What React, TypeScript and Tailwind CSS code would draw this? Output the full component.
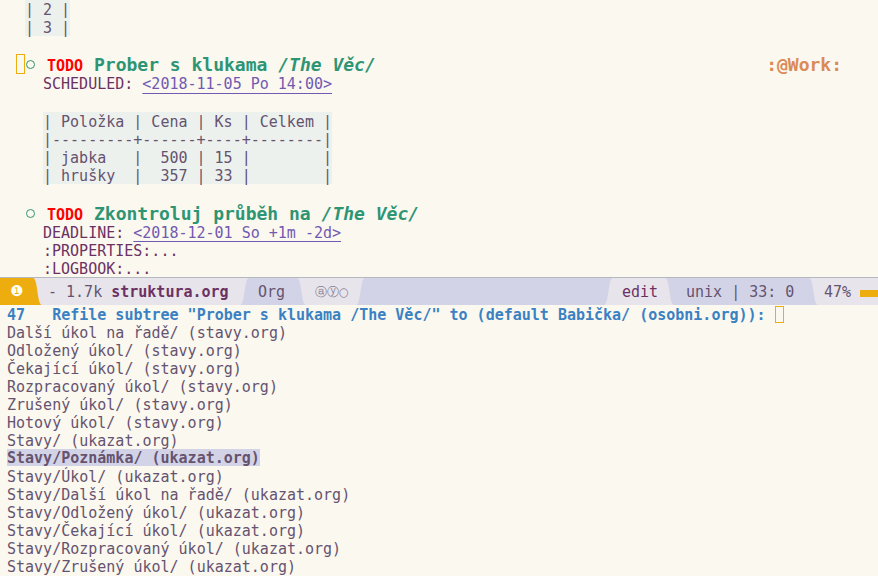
// Emacs (spacemacs-light) org buffer + refile minibuffer

const base = 'text-[#655370]';
const row = 'h-[18px] whitespace-pre leading-[20px]';

function Sep({ left, right, tab }: { left: string; right: string; tab: 'left' | 'right' }) {
  // wave separator between two powerline segments
  return (
    <svg width="10" height="27" viewBox="0 0 10 27" preserveAspectRatio="none" className="block shrink-0">
      {tab === 'left' ? (
        <>
          <rect width="10" height="27" fill={right} />
          <path d="M0 0 H1 C6 0 5 27 10 27 H0 Z" fill={left} />
        </>
      ) : (
        <>
          <rect width="10" height="27" fill={left} />
          <path d="M10 0 H9 C4 0 5 27 0 27 H10 Z" fill={right} />
        </>
      )}
    </svg>
  );
}

function TableRow({ text, indent = 'pl-[43px]' }: { text: string; indent?: string }) {
  return (
    <div className={`h-[18px] whitespace-pre ${indent}`}>
      <span className="inline-block h-[18px] bg-[#edf1ed] align-top leading-[20px]">{text}</span>
    </div>
  );
}

function Heading({ title, tag }: { title: string; tag?: string }) {
  return (
    <div className="flex h-[20px] pl-[16px]">
      <span className="w-[9px] shrink-0" />
      <span className="flex w-[22px] shrink-0 items-center pl-[1px] pt-[1px]">
        <span className="h-[9px] w-[9px] rounded-full border-[1.5px] border-[#2d9574]" />
      </span>
      <span className="whitespace-pre text-[18px] font-bold leading-[22px] text-[#2d9574]">
        <span className="text-[15px] text-[#ff0000]">TODO</span> {title} <i>/The Věc/</i>
      </span>
      {tag && (
        <span className="ml-auto mr-[36px] whitespace-pre text-[18px] font-bold leading-[22px] text-[#da8b55]">
          {tag}
        </span>
      )}
    </div>
  );
}

const refileTargets = [
  'Další úkol na řadě/ (stavy.org)',
  'Odložený úkol/ (stavy.org)',
  'Čekající úkol/ (stavy.org)',
  'Rozpracovaný úkol/ (stavy.org)',
  'Zrušený úkol/ (stavy.org)',
  'Hotový úkol/ (stavy.org)',
  'Stavy/ (ukazat.org)',
  'Stavy/Poznámka/ (ukazat.org)',
  'Stavy/Úkol/ (ukazat.org)',
  'Stavy/Další úkol na řadě/ (ukazat.org)',
  'Stavy/Odložený úkol/ (ukazat.org)',
  'Stavy/Čekající úkol/ (ukazat.org)',
  'Stavy/Rozpracovaný úkol/ (ukazat.org)',
  'Stavy/Zrušený úkol/ (ukazat.org)',
];

const ORANGE = '#eead0e';
const ACT1 = '#e7e5eb';
const ACT2 = '#d3d3e7';

export default function App() {
  return (
    <div
      className={`h-[576px] w-[878px] overflow-hidden bg-[#fbf8ef] font-['DejaVu_Sans_Mono',monospace] text-[15px] ${base}`}
    >
      {/* buffer */}
      <TableRow text="| 2 |" indent="pl-[25px]" />
      <TableRow text="| 3 |" indent="pl-[25px]" />
      <div className="h-[18px]" />

      <div className="relative">
        <span className="absolute left-[16px] top-0 h-[20px] w-[9px] border border-[#eead0e]" />
        <Heading title="Prober s klukama" tag=":@Work:" />
      </div>
      <div className="h-[19px] whitespace-pre pl-[43px] leading-[21px]">
        <span className="text-[#6c3163]">SCHEDULED: </span>
        <span className="text-[#715ab1] underline decoration-1 underline-offset-[4px]">
          {'<2018-11-05 Po 14:00>'}
        </span>
      </div>
      <div className="h-[19px]" />

      <TableRow text="| Položka | Cena | Ks | Celkem |" />
      <TableRow text="|---------+------+----+--------|" />
      <TableRow text="| jabka   |  500 | 15 |        |" />
      <TableRow text="| hrušky  |  357 | 33 |        |" />
      <div className="h-[19px]" />

      <Heading title="Zkontroluj průběh na" />
      <div className={`${row} pl-[43px]`}>
        <span className="text-[#6c3163]">DEADLINE: </span>
        <span className="text-[#715ab1] underline decoration-1 underline-offset-[3px]">
          {'<2018-12-01 So +1m -2d>'}
        </span>
      </div>
      <div className={`${row} pl-[43px] text-[#6c3163]`}>:PROPERTIES:...</div>
      <div className={`${row} pl-[43px] text-[#6c3163]`}>:LOGBOOK:...</div>

      {/* mode line */}
      <div className="flex h-[28px] border-t border-[#b3b9be] bg-[#d3d3e7] leading-[28px]">
        <div className="flex w-[32px] shrink-0 items-center justify-center bg-[#eead0e] pl-[2px]">
          <span className="font-['DejaVu_Sans',sans-serif] text-[15px] leading-none text-white">❶</span>
        </div>
        <Sep left={ORANGE} right={ACT1} tab="left" />
        <div className="w-[198px] shrink-0 whitespace-pre bg-[#e7e5eb] pl-[6px]">
          - 1.7k <span className="font-bold text-[#6c3163]">struktura.org</span>
        </div>
        <Sep left={ACT1} right={ACT2} tab="right" />
        <div className="w-[46px] shrink-0 whitespace-pre bg-[#d3d3e7] pl-[8px]">Org</div>
        <Sep left={ACT2} right={ACT1} tab="left" />
        <div className="w-[50px] shrink-0 whitespace-pre bg-[#e7e5eb] pl-[9px] font-['DejaVu_Sans',sans-serif] text-[11.5px] text-[#8b7f96]">
          ⓐⓨ○
        </div>
        <Sep left={ACT1} right={ACT2} tab="right" />
        <div className="flex-1 bg-[#d3d3e7]" />
        <Sep left={ACT2} right={ACT1} tab="right" />
        <div className="w-[50px] shrink-0 whitespace-pre bg-[#e7e5eb] pl-[8px] text-[#6c3163]">edit</div>
        <Sep left={ACT1} right={ACT2} tab="left" />
        <div className="w-[134px] shrink-0 whitespace-pre bg-[#d3d3e7] pl-[12px]">unix | 33: 0</div>
        <Sep left={ACT2} right={ACT1} tab="left" />
        <div className="flex w-[60px] shrink-0 bg-[#e7e5eb] pl-[6px]">
          <span className="whitespace-pre">47%</span>
          <span className="ml-[9px] mt-[12px] h-[7px] w-[18px] bg-[#eead0e]" />
        </div>
      </div>

      {/* minibuffer */}
      <div className="flex h-[18px] items-start whitespace-pre pl-[7px] leading-[20px]">
        <span className="font-bold text-[#3a81c3]">
          {'47   Refile subtree "Prober s klukama /The Věc/" to (default Babička/ (osobni.org)): '}
        </span>
        <span className="mt-[1px] h-[17px] w-[9px] border border-[#eead0e]" />
      </div>
      {refileTargets.map((t, i) => (
        <div key={t} className={`${row} pl-[7px]`}>
          {i === 7 ? (
            <span className="inline-block h-[17px] bg-[#d3d3e7] align-top font-bold leading-[19px]">{t}</span>
          ) : (
            t
          )}
        </div>
      ))}
    </div>
  );
}
